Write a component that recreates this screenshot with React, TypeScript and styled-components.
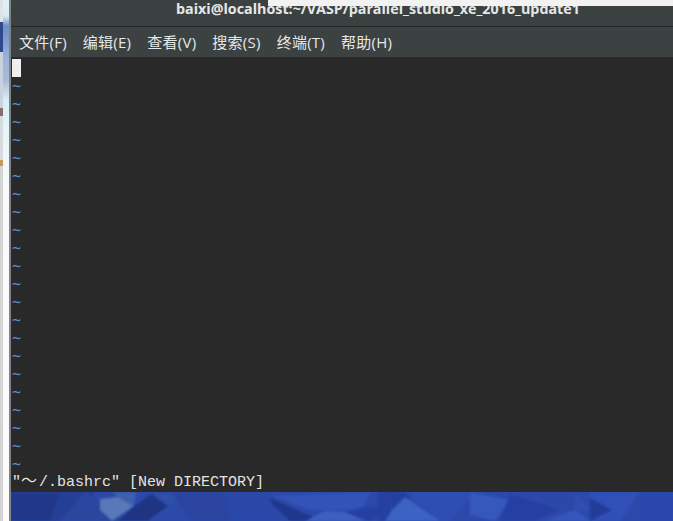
import styled, { createGlobalStyle } from "styled-components";

const GlobalStyle = createGlobalStyle`
  html, body {
    margin: 0;
    padding: 0;
    background: #f2f2f2;
  }
`;

const menus = ["文件(F)", "编辑(E)", "查看(V)", "搜索(S)", "终端(T)", "帮助(H)"];
const tildeCount = 22;

const facets: { points: string; fill: string }[] = [
  { points: "11,492 60,492 50,521 11,521", fill: "#21378a" },
  { points: "60,492 95,492 85,521 50,521", fill: "#253f96" },
  { points: "85,492 98,500 130,521 60,521", fill: "#2a469f" },
  { points: "100,499 118,497 134,506 112,521 100,510", fill: "#5878b8" },
  { points: "112,492 136,492 134,506 118,497", fill: "#3d5fae" },
  { points: "134,506 152,494 168,506 148,521 118,521", fill: "#1f3584" },
  { points: "152,494 200,494 168,506", fill: "#2f4fa8" },
  { points: "168,506 190,496 206,506 190,521 148,521", fill: "#2c4aa8" },
  { points: "172,492 225,492 230,521 190,521", fill: "#2a44a0" },
  { points: "225,492 270,492 272,521 230,521", fill: "#2a48a8" },
  { points: "270,498 322,521 290,521 272,504", fill: "#1f378c" },
  { points: "272,496 370,492 362,510 310,510", fill: "#3353b8" },
  { points: "305,521 325,511 345,512 365,521", fill: "#3d60c0" },
  { points: "365,507 390,510 370,521 345,512", fill: "#2540a0" },
  { points: "378,492 392,492 390,521 378,521", fill: "#2440a0" },
  { points: "392,492 420,492 392,510", fill: "#24409e" },
  { points: "392,510 405,497 440,521 385,521", fill: "#3c62c4" },
  { points: "405,492 475,492 450,521 440,521", fill: "#2e4eb4" },
  { points: "470,492 510,500 495,521 470,515", fill: "#3558bc" },
  { points: "510,494 560,510 535,521 500,521", fill: "#2540a2" },
  { points: "545,521 575,510 590,521", fill: "#3656bc" },
  { points: "575,492 590,510 575,510", fill: "#2f4fb2" },
  { points: "590,492 640,492 620,521 590,521", fill: "#3050b8" },
  { points: "590,498 612,510 590,521", fill: "#223c98" },
  { points: "640,492 673,492 673,521 640,521", fill: "#2b49ad" },
];

export default function App() {
  return (
    <Screen>
      <GlobalStyle />
      <LeftStrip>
        <StripOuter />
        <StripGlow />
        <StripEdge />
      </LeftStrip>
      <Main>
        <TopSheet />
        <TitleBar>
          <TitleText>baixi@localhost:~/VASP/parallel_studio_xe_2016_update1</TitleText>
        </TitleBar>
        <MenuBar>
          {menus.map((m) => (
            <MenuItem key={m}>{m}</MenuItem>
          ))}
        </MenuBar>
        <Terminal>
          <Cursor />
          {Array.from({ length: tildeCount }).map((_, i) => (
            <Tilde key={i}>~</Tilde>
          ))}
          <StatusLine>
            "<WideTilde>～</WideTilde>/.bashrc" [New DIRECTORY]
          </StatusLine>
        </Terminal>
        <Wallpaper>
          <WallpaperArt viewBox="11 492 662 29" preserveAspectRatio="none">
            <rect x="11" y="492" width="662" height="29" fill="#2c49aa" />
            {facets.map((f) => (
              <polygon key={f.points} points={f.points} fill={f.fill} />
            ))}
          </WallpaperArt>
        </Wallpaper>
      </Main>
    </Screen>
  );
}

const Screen = styled.div`
  display: flex;
  width: 673px;
  height: 521px;
  overflow: hidden;
`;

const LeftStrip = styled.div`
  display: flex;
  width: 11px;
  flex-shrink: 0;
`;

const StripOuter = styled.div`
  width: 3px;
  background: linear-gradient(
    #dfe3e6 0 22px,
    #2f4a8c 22px 52px,
    #c9d2de 52px 108px,
    #8a6a70 108px 116px,
    #d8dbdd 116px 160px,
    #c49a60 160px 166px,
    #d4d4d4 166px
  );
`;

const StripGlow = styled.div`
  width: 6px;
  background: linear-gradient(
    #dff1f6 0,
    #d6ecf4 16px,
    #6f8ec6 26px,
    #9db5da 60px,
    #aabbd2 80px,
    #d6f0f6 100px,
    #e4f6f8 130px,
    #fafafa 190px,
    #fcfcfc 521px
  );
`;

const StripEdge = styled.div`
  width: 2px;
  background: #7f8384;
`;

const Main = styled.div`
  position: relative;
  display: flex;
  flex-direction: column;
  flex: 1;
  min-width: 0;
`;

const TopSheet = styled.div`
  position: absolute;
  top: 0;
  left: 257px;
  right: 0;
  height: 6px;
  background: #f2f2f2;
`;

const TitleBar = styled.div`
  height: 26px;
  flex-shrink: 0;
  padding-left: 165px;
  background: #3b4040;
  border-bottom: 1px solid #232626;
  overflow: hidden;
`;

const TitleText = styled.div`
  font: 700 14.3px/18px "Open Sans", sans-serif;
  color: #e6e8e8;
  white-space: nowrap;
`;

const MenuBar = styled.div`
  height: 28px;
  flex-shrink: 0;
  display: flex;
  align-items: center;
  gap: 16px;
  padding: 0 0 2px 8px;
  background: #3c4141;
`;

const MenuItem = styled.span`
  font: 15px "Open Sans", "Noto Sans CJK SC", sans-serif;
  letter-spacing: 0.25px;
  color: #e6e8e8;
`;

const Terminal = styled.div`
  flex: 1;
  min-height: 0;
  background: #292929;
  padding-top: 2px;
  font: 15px/18px "Liberation Mono", monospace;
  color: #e4e4e4;
`;

const Cursor = styled.div`
  width: 9px;
  height: 18px;
  margin-left: 1px;
  background: #eeeeee;
`;

const Tilde = styled.div`
  height: 18px;
  padding-left: 1px;
  font-family: "DejaVu Sans Mono", monospace;
  line-height: 18px;
  color: #5a8fc8;
`;

const StatusLine = styled.div`
  height: 18px;
  padding-left: 1px;
  line-height: 13px;
  white-space: pre;
`;

const WideTilde = styled.span`
  display: inline-block;
  width: 18px;
  font-family: "Noto Sans CJK SC", sans-serif;
  font-size: 16px;
  line-height: 13px;
`;

const Wallpaper = styled.div`
  height: 29px;
  flex-shrink: 0;
  overflow: hidden;
  background: #2c49aa;
`;

const WallpaperArt = styled.svg`
  display: block;
  width: 100%;
  height: 100%;
  filter: blur(1.2px);
`;
